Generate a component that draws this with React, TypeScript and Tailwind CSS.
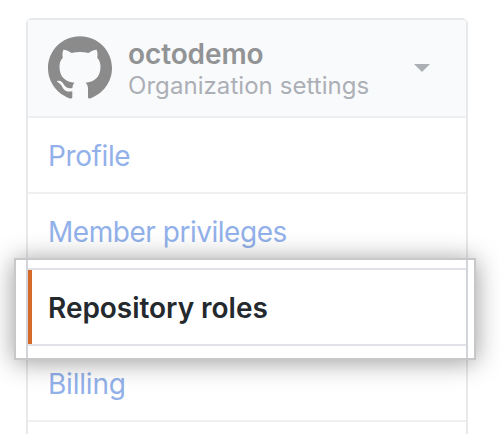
const links = "flex h-[76px] items-center border-b-2 border-[#efeff1] px-5 pt-[2px] text-[28px] leading-[40px] text-[#92b1ea]";

function GitHubMark() {
  return (
    <svg viewBox="0 0 64 64" className="size-16 shrink-0 fill-[#8b8b8b]" aria-hidden="true">
      <path d="M32 0.3C14.3 0.3 0 14.6 0 32.1C0 46.2 9.1 58 21.8 62.4C23.6 62.8 24.3 62.2 24.3 61V55.2C19.5 56.2 16.7 54.8 15.2 52.4C14 50.2 13.2 48.3 11 46.9C8.8 45.8 8.3 44.8 10.4 44.8C12.8 44.7 14.5 46.3 15.6 48.2C17.7 51.6 20.5 52.7 24.4 51.9C24.6 49.6 25.2 47.8 26.5 46.7C18.2 45.8 11.5 42 11.5 30.5C11.5 27 12.7 24 14.8 21.8C14.3 19.7 14.2 16.8 15.4 13.8C18.1 13.8 21 15.3 23.5 16.9C29 15.6 35 15.6 40.5 16.9C43 15.3 45.9 13.8 48.6 13.8C49.8 16.8 49.7 19.7 49.2 21.8C51.3 24 52.5 27 52.5 30.5C52.5 42 45.8 45.8 37.5 46.7C39.1 47.9 40 50 40 52.6V61C40 62.2 40.7 62.8 42.2 62.4C54.9 58 64 46.2 64 32.1C64 14.6 49.7 0.3 32 0.3Z" />
    </svg>
  );
}

export default function App() {
  return (
    <div className="h-[434px] w-[500px] overflow-hidden bg-white pt-[18px] pl-[26px] font-[Inter,sans-serif]">
      <nav className="h-[440px] w-[442px] rounded-t-[6px] border-2 border-b-0 border-[#e8e9eb]">
        <header className="flex h-[98px] items-center border-b-2 border-[#efeff1] bg-[#f9fafc] pr-[36px] pl-5">
          <GitHubMark />
          <div className="ml-4 flex-1 pt-[4px] whitespace-nowrap">
            <div className="text-[28px] leading-[32px] font-semibold tracking-[-0.1px] text-[#929395]">octodemo</div>
            <div className="text-[24px] leading-[32px] tracking-[0.06px] text-[#acafb5]">Organization settings</div>
          </div>
          <svg viewBox="0 0 16 8" className="h-2 w-4 fill-[#acafb4]" aria-hidden="true">
            <path d="M0 0h16L8 8Z" />
          </svg>
        </header>
        <a className={links}><span className="tracking-[-0.4px]">Profile</span></a>
        <a className={links}><span className="tracking-[-0.47px]">Member privileges</span></a>
        <div className="relative h-[76px]">
          <div className="absolute -top-[12px] -left-[14px] h-[102px] w-[462px] border-2 border-[#c8c8c8] bg-white pr-[6px] pl-[10px] shadow-[0_2px_24px_rgba(0,0,0,0.4)]">
            <div className="h-full border-x-2 border-[#d1d5da] pt-2">
              <a className="flex h-[78px] items-center border-y-2 border-[#e1e1e8] text-[28px] font-semibold text-[#24292e]">
                <span className="mr-4 h-full w-1 bg-[#d56a2b]" />
                <span className="pt-[2px] tracking-[-0.03px]">Repository roles</span>
              </a>
            </div>
          </div>
        </div>
        <a className={links}><span className="tracking-[-0.2px]">Billing</span></a>
      </nav>
    </div>
  );
}
